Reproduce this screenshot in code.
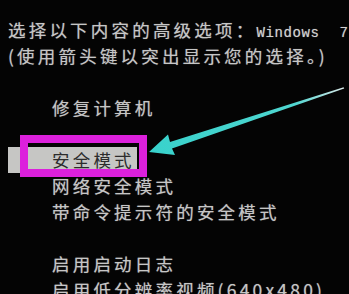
const cjk = "font-['Noto_Sans_CJK_SC','Noto_Sans',sans-serif]";
const mono = "font-['Liberation_Mono',monospace] text-[14px] leading-none text-[#d2d2d2]";

const items = [
  { id: 'repair', label: '修复计算机', gapBefore: false },
  { id: 'safe', label: '安全模式', gapBefore: true, active: true },
  { id: 'net', label: '网络安全模式', gapBefore: false },
  { id: 'cmd', label: '带命令提示符的安全模式', gapBefore: false },
  { id: 'log', label: '启用启动日志', gapBefore: true },
  { id: 'vga', label: '启用低分辨率视频(640x480)', gapBefore: false },
];

const Arrow = () => (
  <svg className="absolute left-0 top-0 pointer-events-none" width="349" height="294" viewBox="0 0 349 294">
    <defs>
      <linearGradient id="shaft" x1="150" y1="152" x2="343" y2="88" gradientUnits="userSpaceOnUse">
        <stop offset="0" stopColor="#38d2cc" />
        <stop offset="0.75" stopColor="#4fd6d0" />
        <stop offset="1" stopColor="#d8e8e8" />
      </linearGradient>
    </defs>
    <polygon
      points="149,152 175,155 172,148.5 344.2,88.4 343.6,87.2 170,142 168,134.5"
      fill="url(#shaft)"
    />
  </svg>
);

export default function App() {
  return (
    <div className={`relative w-[349px] h-[294px] overflow-hidden bg-[#040404] text-[#c6c6c6] ${cjk} text-[17.5px] leading-[26px] tracking-[3.2px] [text-shadow:0_0_1px_#777]`}>
      <div className="pt-[17px] pl-[8px] whitespace-nowrap">
        <div className="h-[26px] overflow-visible">
          选择以下内容的高级选项：
          <span className={`${mono} tracking-[0.6px]`}>Windows</span>
          <span className={`${mono} ml-[20px]`}>7</span>
        </div>
        <div className="h-[26px]">(使用箭头键以突出显示您的选择。)</div>
      </div>

      <div className="mt-[26px] whitespace-nowrap">
        {items.map((item) => (
          <div key={item.id} className={item.gapBefore ? 'mt-[26px]' : ''}>
            {item.active ? (
              <div className="ml-[8px] w-[129px] h-[26px] bg-[#c6c6c4] pl-[44px] text-[#2c2c2c] [text-shadow:none]">
                {item.label}
              </div>
            ) : (
              <div className="h-[26px] pl-[52px]">{item.label}</div>
            )}
          </div>
        ))}
      </div>

      {/* annotation box */}
      <div className="absolute left-[20px] top-[135px] w-[127px] h-[42px] border-[8px] border-[#dc20dc] pointer-events-none" />
      <Arrow />
    </div>
  );
}
